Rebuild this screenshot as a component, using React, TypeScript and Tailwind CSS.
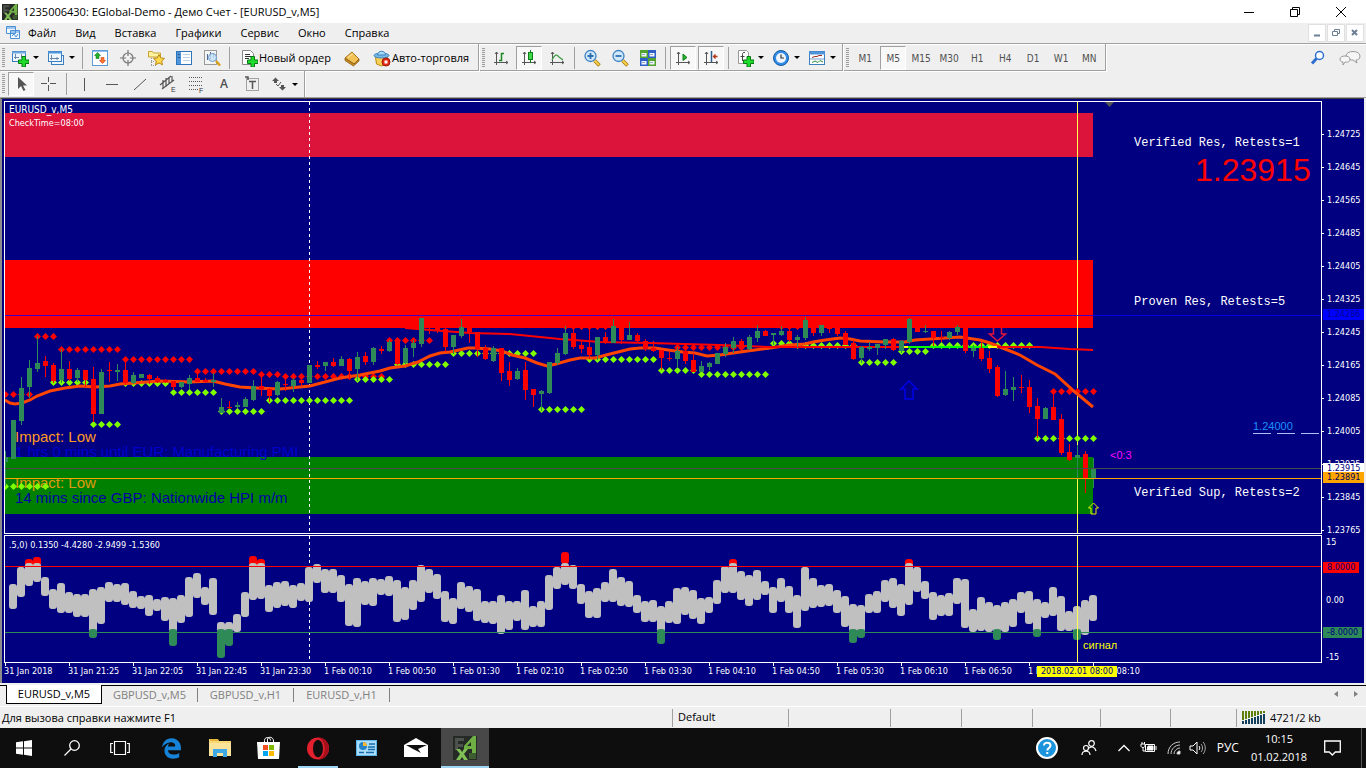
import React, { useState } from "react";
import { FaEdgeLegacy } from "react-icons/fa6";

type Candle = [high: number, bodyTop: number, bodyBottom: number, low: number, up: 0 | 1];

// one entry per 5 minute bar, 8px apart, first bar at x=5
const candles: Candle[] = [
  [451, 457, 462, 486, 1], [420, 420, 459, 459, 1], [377, 388, 421, 425, 1], [360, 368, 387, 398, 1],
  [336, 363, 369, 372, 1], [356, 361, 366, 377, 0], [363, 365, 381, 383, 0], [349, 369, 380, 383, 1],
  [361, 369, 379, 381, 0], [368, 370, 378, 382, 1], [370, 370, 380, 387, 0], [367, 379, 414, 422, 0],
  [369, 372, 414, 414, 1], [362, 370, 371, 382, 0], [364, 370, 372, 381, 1], [361, 370, 383, 385, 0],
  [372, 375, 383, 384, 1], [374, 374, 378, 378, 1], [374, 375, 379, 384, 0], [376, 378, 382, 383, 0],
  [379, 380, 382, 383, 0], [381, 381, 387, 390, 0], [382, 382, 387, 388, 1], [375, 378, 384, 389, 1],
  [372, 378, 382, 382, 0], [378, 380, 382, 383, 0], [373, 380, 382, 387, 1], [398, 407, 413, 413, 1],
  [401, 407, 408, 409, 0], [402, 405, 407, 408, 1], [397, 399, 407, 407, 1], [380, 386, 400, 401, 1],
  [374, 386, 389, 396, 0], [388, 389, 396, 402, 0], [381, 382, 395, 396, 1], [377, 384, 385, 391, 0],
  [378, 380, 386, 392, 1], [378, 380, 383, 386, 0], [365, 365, 383, 383, 1], [361, 365, 367, 369, 0],
  [362, 362, 366, 371, 1], [358, 362, 366, 367, 0], [356, 359, 366, 366, 1], [358, 359, 371, 378, 0],
  [352, 357, 369, 381, 1], [352, 356, 362, 365, 0], [347, 348, 362, 365, 1], [346, 349, 351, 354, 0],
  [340, 342, 351, 352, 1], [340, 341, 364, 365, 0], [345, 348, 363, 364, 1], [340, 343, 348, 357, 1],
  [318, 318, 344, 347, 1], [315, 320, 327, 334, 0], [315, 320, 330, 333, 0], [328, 329, 347, 352, 0],
  [335, 335, 347, 354, 1], [319, 327, 336, 338, 1], [325, 325, 332, 343, 0], [332, 332, 349, 357, 0],
  [345, 348, 359, 360, 0], [346, 348, 361, 362, 1], [348, 348, 373, 381, 0], [362, 371, 380, 386, 0],
  [368, 371, 379, 380, 1], [362, 370, 390, 400, 0], [389, 389, 395, 407, 0], [390, 391, 394, 411, 1],
  [362, 362, 393, 394, 1], [348, 353, 363, 365, 1], [326, 333, 354, 355, 1], [326, 333, 347, 349, 0],
  [341, 345, 349, 353, 0], [329, 347, 355, 359, 0], [337, 337, 355, 360, 1], [332, 337, 343, 344, 0],
  [319, 326, 343, 343, 1], [326, 326, 340, 344, 0], [322, 335, 340, 340, 1], [333, 335, 341, 342, 0],
  [339, 341, 349, 351, 0], [341, 348, 351, 352, 0], [350, 350, 358, 370, 0], [352, 358, 359, 361, 0],
  [347, 351, 359, 368, 1], [348, 351, 361, 364, 0], [353, 360, 372, 372, 0], [361, 366, 372, 372, 1],
  [362, 363, 367, 370, 1], [353, 353, 364, 364, 1], [343, 347, 354, 357, 1], [337, 341, 348, 353, 1],
  [339, 341, 346, 350, 0], [335, 337, 349, 350, 1], [325, 331, 338, 342, 1], [330, 331, 336, 336, 0],
  [333, 333, 335, 345, 1], [326, 331, 335, 336, 1], [328, 331, 340, 342, 0], [335, 337, 340, 347, 1],
  [317, 320, 338, 340, 1], [328, 328, 333, 336, 0], [325, 325, 333, 336, 1], [328, 328, 329, 333, 0],
  [328, 328, 334, 336, 0], [331, 333, 345, 345, 0], [340, 343, 359, 360, 0], [346, 347, 358, 363, 1],
  [342, 347, 349, 351, 1], [344, 344, 348, 355, 1], [339, 339, 345, 349, 1], [338, 339, 350, 351, 0],
  [340, 341, 351, 353, 1], [318, 319, 342, 344, 1], [328, 328, 332, 332, 0], [325, 331, 332, 333, 1],
  [331, 331, 338, 346, 0], [331, 337, 338, 342, 0], [331, 332, 338, 340, 1], [325, 327, 332, 335, 1],
  [328, 328, 351, 353, 0], [345, 348, 351, 357, 1], [342, 348, 359, 361, 0], [351, 358, 369, 373, 0],
  [365, 367, 396, 397, 0], [371, 389, 395, 396, 1], [377, 387, 390, 401, 1], [375, 387, 388, 393, 0],
  [380, 387, 407, 413, 0], [398, 406, 419, 438, 0], [407, 408, 419, 419, 1], [391, 407, 420, 420, 0],
  [414, 419, 453, 455, 0], [444, 452, 460, 461, 0], [445, 455, 458, 479, 1], [451, 454, 479, 493, 0],
  [458, 468, 479, 488, 1],
];

// x, count, y
const redDots = [
  [5, 4, 394], [37, 3, 336], [61, 8, 349], [125, 9, 359], [197, 8, 371], [261, 3, 374],
  [285, 13, 376], [389, 6, 340], [565, 6, 326], [677, 9, 347], [781, 3, 326], [1053, 6, 391],
];
const greenDots = [
  [5, 6, 486], [53, 5, 382], [93, 4, 424], [125, 6, 383], [173, 6, 392], [221, 6, 411], [269, 11, 400],
  [357, 5, 379], [397, 7, 364], [453, 11, 353], [541, 6, 409], [589, 9, 359], [661, 5, 370],
  [701, 9, 374], [773, 3, 343], [797, 8, 345], [861, 5, 362], [901, 4, 351], [933, 13, 345], [1037, 8, 438],
];

const movingAverage =
  "5,400 10,403 15,404 22,403 30,400 37,396 50,391 65,388 80,386 95,387 110,386 120,384 133,383 160,381 190,382 213,381 225,384 240,387 256,388 280,389 300,387 310,386 340,378 360,375 380,371 390,368 405,366 418,362 430,356 440,353 450,352 468,348 475,348 490,349 502,351 512,355 525,358 537,363 547,366 556,364 570,360 580,358 595,358 610,354 630,349 640,348 655,348 668,350 683,352 695,353 707,356 720,355 740,352 755,350 770,348 790,345 805,344 813,342 825,340 840,338 850,339 860,341 885,342 905,342 915,340 930,339 960,337 980,340 990,343 1000,347 1020,355 1037,365 1055,374 1075,392 1093,407";

// top and bottom of every oscillator bar, first one at x=13
const oscillator = [
  [584, 609], [567, 597], [559, 586], [557, 582], [577, 596], [589, 609], [583, 613], [592, 613], [594, 617],
  [594, 617], [589, 638], [587, 624], [582, 602], [584, 602], [583, 605], [591, 608], [596, 609], [595, 616],
  [599, 611], [597, 621], [598, 646], [595, 623], [577, 617], [573, 598], [587, 605], [578, 615], [622, 658],
  [622, 646], [614, 632], [592, 617], [556, 600], [559, 599], [585, 612], [582, 608], [581, 606], [585, 608],
  [583, 601], [567, 602], [564, 583], [569, 593], [569, 593], [575, 602], [584, 626], [578, 627], [581, 605],
  [578, 606], [579, 595], [576, 596], [580, 622], [587, 620], [580, 610], [565, 602], [569, 593], [574, 599],
  [591, 622], [598, 624], [582, 609], [586, 612], [589, 621], [601, 623], [601, 624], [595, 634], [601, 630],
  [601, 621], [590, 630], [606, 627], [601, 627], [575, 610], [567, 589], [552, 585], [565, 589], [584, 604],
  [591, 618], [588, 618], [582, 602], [569, 602], [577, 606], [581, 607], [595, 613], [601, 622], [600, 622],
  [606, 644], [601, 623], [588, 624], [587, 615], [590, 619], [598, 624], [597, 613], [580, 604], [566, 593],
  [559, 593], [571, 600], [575, 606], [570, 600], [581, 595], [587, 613], [578, 602], [586, 613], [595, 628],
  [567, 611], [578, 608], [585, 607], [584, 606], [590, 613], [596, 627], [604, 643], [605, 638], [594, 613],
  [591, 613], [580, 602], [578, 608], [584, 616], [559, 605], [567, 592], [581, 599], [592, 620], [595, 616],
  [593, 616], [578, 604], [579, 628], [609, 632], [597, 631], [602, 632], [605, 640], [602, 632], [599, 627],
  [592, 613], [591, 624], [599, 637], [602, 618], [587, 616], [596, 631], [611, 631], [606, 640], [600, 635],
  [595, 621],
];

const prices = [
  "1.24725", "1.24645", "1.24565", "1.24485", "1.24405", "1.24325", "1.24245",
  "1.24165", "1.24085", "1.24005", "1.23925", "1.23845", "1.23765",
];
const times = [
  "31 Jan 2018", "31 Jan 21:25", "31 Jan 22:05", "31 Jan 22:45", "31 Jan 23:30", "1 Feb 00:10",
  "1 Feb 00:50", "1 Feb 01:30", "1 Feb 02:10", "1 Feb 02:50", "1 Feb 03:30", "1 Feb 04:10",
  "1 Feb 04:50", "1 Feb 05:30", "1 Feb 06:10", "1 Feb 06:50", "1 Feb 07:30", "1 Feb 08:10",
];
const menu = ["Файл", "Вид", "Вставка", "Графики", "Сервис", "Окно", "Справка"];
const timeframes = ["M1", "M5", "M15", "M30", "H1", "H4", "D1", "W1", "MN"];
const tabs = ["EURUSD_v,M5", "GBPUSD_v,M5", "GBPUSD_v,H1", "EURUSD_v,H1"];

function Svg({ children, size = 18 }: { children: React.ReactNode; size?: number }) {
  return (
    <svg width={size} height={size} viewBox="0 0 18 18" fill="none" className="shrink-0">
      {children}
    </svg>
  );
}

const Plus = () => (
  <path d="M11 7.500h3.500V11H18v3.500h-3.500V18H11v-3.500H7.500V11H11z" fill="#1fdc2c" stroke="#067a10" strokeWidth="1" />
);
const Axes = () => <path d="M4.500 3v13M2 13.500h14M3 5l1.500-2L6 5M14 12l2 1.500-2 1.500" stroke="#555" />;

const NewChartIcon = () => (
  <Svg>
    <rect x="1.500" y="2.500" width="13" height="10" fill="#eef6ff" stroke="#3c7fc0" />
    <path d="M1 3.500h14" stroke="#6fa9dd" strokeWidth="2" />
    <path d="M4.500 5v5M3 8.500h5M10.500 5v4" stroke="#6a86a5" />
    <Plus />
  </Svg>
);
const ProfilesIcon = () => (
  <Svg>
    <rect x="4.500" y="6.500" width="12" height="9" fill="#eef6ff" stroke="#3c7fc0" />
    <rect x="1.500" y="2.500" width="13" height="10" fill="#eef6ff" stroke="#3c7fc0" />
    <path d="M1 3.500h14" stroke="#4f97dd" strokeWidth="2" />
    <path d="M4.500 6v5M3 9.500h9M10 8v3" stroke="#6a86a5" />
  </Svg>
);
const MarketIcon = () => (
  <Svg>
    <rect x="1.500" y="1.500" width="15" height="15" fill="#fff" stroke="#5b9bd8" />
    <path d="M2 2.500h14" stroke="#8ec1ee" />
    <path d="M6.500 3.500l3 3h-1.500v3h-3v-3H3.500z" fill="#23b12c" stroke="#0b7d16" strokeWidth=".6" />
    <path d="M11.500 14.500l3-3H13v-3h-3v3H8.500z" fill="#ff7733" stroke="#cc3d0a" strokeWidth=".6" />
  </Svg>
);
const TargetIcon = () => (
  <Svg>
    <circle cx="9" cy="9" r="5" stroke="#777" strokeWidth="1.200" />
    <path d="M9 1v6M9 11v6M1 9h6M11 9h6" stroke="#777" strokeWidth="1.200" />
  </Svg>
);
const FolderStarIcon = () => (
  <Svg>
    <path d="M1.500 8V2.500h4l1 1.500h7V8z" fill="#fff3a0" stroke="#c9a12c" />
    <path d="M4.500 9v8M4 12.500h3M4 16.500h5" stroke="#999" strokeDasharray="1 1" />
    <path d="M12 5.500l1.700 3.400 3.800.5-2.800 2.600.8 3.800-3.500-1.800-3.500 1.800.8-3.800-2.800-2.600 3.800-.5z" fill="#ffd94a" stroke="#b98a14" />
  </Svg>
);
const NavigatorIcon = () => (
  <Svg>
    <rect x="1.500" y="2.500" width="15" height="13" fill="#fff" stroke="#2f74b8" />
    <path d="M4 3v12" stroke="#4f97dd" strokeWidth="4" />
    <path d="M3.500 5.500h1M3.500 8.500h1" stroke="#111" />
    <path d="M8 5.500h7M8 8.500h7M8 11.500h7" stroke="#bcd0e8" />
  </Svg>
);
const TesterIcon = () => (
  <Svg>
    <rect x="1.500" y="1.500" width="12" height="14" fill="#f4f4f4" stroke="#9a9a9a" />
    <path d="M4.500 5v6M7.500 3v7M10.500 4v5" stroke="#4a6a90" />
    <path d="M13 12l4 4.500" stroke="#d6a018" strokeWidth="2.500" />
    <circle cx="9.500" cy="8.500" r="4" fill="#c5e2fa" fillOpacity=".8" stroke="#6d9dcf" />
  </Svg>
);
const OrderIcon = () => (
  <Svg>
    <path d="M2.500 1.500h8l3 3v11h-11z" fill="#fff" stroke="#888" />
    <path d="M5 5.500h5M5 7.500h6M5 9.500h4" stroke="#333" />
    <Plus />
  </Svg>
);
const BookIcon = () => (
  <Svg>
    <path d="M2 9l7-6 7 7-5 5z" fill="#f2c257" stroke="#a8741a" />
    <path d="M2 9v2.500l8.500 5.500L16 12v-2l-5 5z" fill="#c88c24" stroke="#8a5c10" strokeWidth=".8" />
    <path d="M5 8.500l5-4" stroke="#fde7a8" />
  </Svg>
);
const AutoTradeIcon = () => (
  <Svg>
    <path d="M2.500 8h12l-1 7-5 2-5-2z" fill="#f5cf56" stroke="#b98a14" />
    <ellipse cx="8.500" cy="6.500" rx="7.500" ry="2.500" fill="#74b9ea" stroke="#3d83bd" />
    <path d="M4.500 6c0-5 8-5 8 0z" fill="#a5d7f7" stroke="#3d83bd" />
    <circle cx="13" cy="13" r="4" fill="#e02b16" stroke="#a81508" />
    <rect x="11.500" y="11.500" width="3" height="3" fill="#fff" />
  </Svg>
);
const BarsIcon = () => (
  <Svg>
    <Axes />
    <path d="M7 11.500h2.500V4.500H12" stroke="#1c8a22" strokeWidth="1.500" />
  </Svg>
);
const CandlesIcon = () => (
  <Svg>
    <Axes />
    <path d="M10.500 1v13" stroke="#0e7e16" />
    <rect x="8.500" y="3.500" width="4" height="7" fill="#3fd74b" stroke="#0e7e16" />
  </Svg>
);
const LineIcon = () => (
  <Svg>
    <Axes />
    <path d="M4 11c3-6 5-6 7-3l4 3" stroke="#3f9d46" strokeWidth="1.300" />
  </Svg>
);
const ZoomIcon = ({ plus }: { plus?: boolean }) => (
  <Svg>
    <path d="M11.500 11.500l5 5" stroke="#a87c12" strokeWidth="3.500" />
    <path d="M11.500 11.500l4.500 4.500" stroke="#f5d04a" strokeWidth="2" />
    <circle cx="7.500" cy="7" r="5.500" fill="#cfe8fc" stroke="#3f83c4" strokeWidth="1.300" />
    <path d={plus ? "M4.500 7h6M7.500 4v6" : "M4.500 7h6"} stroke="#2f6fae" strokeWidth="1.800" />
  </Svg>
);
const TileIcon = () => (
  <Svg>
    <path d="M1 1h8v8H1zM9 9h8v8H9z" fill="#52a32c" />
    <path d="M9 1h8v8H9zM1 9h8v8H1z" fill="#2e5fc9" />
    <path d="M2.500 4h5v3.500h-5zM10.500 4h5v3.500h-5zM2.500 12h5v3.500h-5zM10.500 12h5v3.500h-5z" fill="#f0f5ff" />
    <path d="M3 5.500h3M11 5.500h3M3 13.500h3M11 13.500h3" stroke="#9ab" />
  </Svg>
);
const ScrollIcon = () => (
  <Svg>
    <Axes />
    <path d="M9 5l4 3.500-4 3z" fill="#27b433" stroke="#0e7e16" />
  </Svg>
);
const ShiftIcon = () => (
  <Svg>
    <Axes />
    <path d="M9.500 2v11" stroke="#2a5f8c" strokeWidth="1.500" />
    <path d="M15.500 7.500H12M13.500 5.500l-2 2 2 2" stroke="#b5381a" strokeWidth="1.300" />
  </Svg>
);
const IndicatorIcon = () => (
  <Svg>
    <path d="M2.500 1.500h8l2 2v11h-10z" fill="#fff" stroke="#999" />
    <path d="M9 3.500c-2-.5-2.500.5-2.500 2V12M4.500 7.500h4" stroke="#444" />
    <Plus />
  </Svg>
);
const ClockIcon = () => (
  <Svg>
    <circle cx="9" cy="9" r="7.500" fill="#2f8ce8" stroke="#155a9f" />
    <circle cx="9" cy="9" r="5" fill="#eef4fa" />
    <path d="M9 5.500V9h3" stroke="#333" strokeWidth="1.200" />
  </Svg>
);
const TemplateIcon = () => (
  <Svg>
    <rect x="1.500" y="2.500" width="15" height="13" fill="#fff" stroke="#3c7fc0" />
    <path d="M1 4h16" stroke="#4d94da" strokeWidth="3" />
    <path d="M2 10h14" stroke="#6d9fce" />
    <path d="M4 8.500l3-1h2l2-1h3" stroke="#9b2d1d" />
    <path d="M4 13.500l3-1.500 3 1.500 2-2 3 1.500" stroke="#2c8f3b" />
  </Svg>
);

const Grip = () => (
  <span className="mx-0.5 h-5 w-[3px] bg-[repeating-linear-gradient(#9c9c9c_0_1px,#efefef_1px_2px)]" />
);
const Sep = () => <span className="mx-[3px] h-[22px] w-px bg-[#a0a0a0]" />;
const Caret = () => <span className="border-x-[3px] border-t-[3px] border-x-transparent border-t-black" />;

interface ToolProps {
  label: string;
  on?: boolean;
  drop?: boolean;
  text?: string;
  children: React.ReactNode;
}

function Tool({ label, on, drop, text, children }: ToolProps) {
  const width = text ? "gap-px px-1.5" : drop ? "w-[34px] gap-1" : "w-[26px]";
  return (
    <button
      aria-label={label}
      className={`mx-px flex h-6 items-center justify-center text-[11px] text-[#505050] ${width} ${
        on ? "border border-r-white border-b-white border-l-[#a0a0a0] border-t-[#a0a0a0] bg-[#f8f8f8]" : ""
      }`}
    >
      {children}
      {text && <span className="text-black">{text}</span>}
      {drop && <Caret />}
    </button>
  );
}

function Bar({ children }: { children: React.ReactNode }) {
  return (
    <div className="mr-px flex h-[27px] items-center border-r border-b border-[#a0a0a0] pt-px pr-0.5 shadow-[1px_1px_0_#fff]">
      {children}
    </div>
  );
}

function Logo({ size }: { size: number }) {
  return (
    <svg width={size} height={size} viewBox="0 0 24 24">
      <rect width="24" height="24" fill="#262a26" />
      <path d="M2 2h9v3H5v3h5v3H5v3H2z" fill="#4d524c" />
      <path d="M20 0L11 10v3h8v4h4V0z M18 6v4h-4z" fill="#6fb045" fillRule="evenodd" />
      <path d="M3 13h4l2 3 2-3h4l-4 5 4 6h-4l-2-3-2 3H3l4-6z" fill="#7fbf55" />
      <path d="M16 17h7v6h-7z" fill="#3e5c31" />
    </svg>
  );
}

function Dots({ rows, color }: { rows: number[][]; color: string }) {
  return (
    <g fill={color}>
      {rows.map(([x, count, y]) =>
        Array.from({ length: count }).map((_, i) => (
          <path key={`${x}-${y}-${i}`} d={`M${x + i * 8 - 3} ${y + 0.5}l3.500 -3.500l3.500 3.500l-3.500 3.500z`} />
        ))
      )}
    </g>
  );
}

function PriceChart() {
  return (
    <svg className="block h-[431px] w-full" role="img" aria-label="EURUSD M5">
      <g transform="translate(-5 -102)" fontFamily="Liberation Sans">
        <rect x="5" y="113" width="1088" height="44" fill="#dc143c" />
        <rect x="5" y="260" width="1088" height="68" fill="#ff0000" />
        <rect x="5" y="457" width="1088" height="57" fill="#008000" />
        <text x="15" y="457" fontSize="15" fill="#0000cd">1 hrs 0 mins until EUR: Manufacturing PMI</text>
        <text x="15" y="442" fontSize="15" fill="#ff9b1e">Impact: Low</text>
        <text x="15" y="488" fontSize="15" fill="#e09a10">Impact: Low</text>
        <text x="15" y="503" fontSize="15" fill="#0000a8">14 mins since GBP: Nationwide HPI m/m</text>
        <path d="M309.500 102v432" stroke="#fff" strokeDasharray="3 3" />
        <path d="M1077.500 102v432" stroke="#ffff50" />
        <path d="M1105 102h9l-4.500 5z" fill="#555" />
        <Dots rows={redDots} color="#ff0000" />
        <Dots rows={greenDots} color="#7fff00" />
        <polyline points={movingAverage} fill="none" stroke="#ff4500" strokeWidth="3" />
        <g fill="none" strokeWidth="2">
          <polyline points="405,328 430,330 470,333 510,334 560,339 600,342 650,343 720,345 770,347 902,347" stroke="#f00" />
          <path d="M900 347h12M986 347h12" stroke="#ff0" />
          <path d="M908 347h80" stroke="#0f0" />
          <polyline points="997,347 1040,347 1070,349 1093,350" stroke="#f00" />
        </g>
        {candles.map(([high, top, bottom, low, up], i) => (
          <g key={i} fill={up ? "#2e8b57" : "#ff0000"} shapeRendering="crispEdges">
            <rect x={5 + i * 8} y={high} width="1" height={low - high} />
            <rect x={3 + i * 8} y={top} width="5" height={bottom - top} />
          </g>
        ))}
        <rect x="5" y="315" width="100%" height="1" fill="#0000ff" fillOpacity=".75" />
        <rect x="5" y="468" width="100%" height="1" fill="#4a4a4a" />
        <rect x="5" y="478" width="100%" height="1" fill="#ffa500" />
        <path d="M909 381l8 8h-4v10h-8v-10h-4z" fill="none" stroke="#0000e6" strokeWidth="1.500" />
        <path d="M993.500 328v6h-4l8 7l8-7h-4v-6" fill="none" stroke="#e0143c" strokeWidth="1.500" />
        <path d="M1093.500 503l5 5h-2.500v6h-5v-6h-2.500z" fill="none" stroke="#e6f000" />
        <path d="M1253 433.500h66" stroke="#a9c0f0" strokeDasharray="18 6" />
        <text x="1253" y="430" fontSize="11" fill="#1e90ff">1.24000</text>
        <text x="1110" y="459" fontSize="11" fill="#ff00ff">&lt;0:3</text>
        <text x="1195" y="181" fontSize="32" fill="#ff0000">1.23915</text>
        <g fontFamily="Liberation Mono" fontSize="12" fill="#fff">
          <text x="1134" y="146">Verified Res, Retests=1</text>
          <text x="1134" y="305">Proven Res, Retests=5</text>
          <text x="1134" y="496">Verified Sup, Retests=2</text>
        </g>
        <g fontFamily="DejaVu Sans Condensed, DejaVu Sans" fill="#fff">
          <text x="9" y="113" fontSize="10">EURUSD_v,M5</text>
          <text x="9" y="126" fontSize="9">CheckTime=08:00</text>
        </g>
      </g>
    </svg>
  );
}

function Oscillator() {
  return (
    <svg className="block h-[126px] w-full" role="img" aria-label="Oscillator">
      <g transform="translate(-5 -536)">
        <path d="M309.500 536v128" stroke="#fff" strokeDasharray="3 3" />
        {oscillator.map(([top, bottom], i) => {
          const x = 9 + i * 8;
          const grayTop = top < 560 ? 563 : top;
          const grayBottom = bottom > 636 ? 632 : bottom;
          return (
            <g key={i}>
              {top < 560 && <rect x={x} y={top} width="8" height="12" rx="3" fill="#ff0000" />}
              <rect x={x} y={grayTop} width="8" height={grayBottom - grayTop} rx="3" fill="#c0c0c0" />
              {bottom > 636 && <rect x={x} y="629" width="8" height={bottom - 629} rx="3" fill="#2e8b57" />}
            </g>
          );
        })}
        <rect x="5" y="566" width="100%" height="1" fill="#ff0000" />
        <rect x="5" y="632" width="100%" height="1" fill="#2e8b57" />
        <path d="M1077.500 536v128" stroke="#ffff50" />
        <text x="1083" y="649" fontSize="11" fontFamily="Liberation Sans" fill="#ffff00">сигнал</text>
        <text x="9" y="548" fontSize="9" fontFamily="DejaVu Sans Condensed, DejaVu Sans" fill="#fff">
          .5,0) 0.1350 -4.4280 -2.9499 -1.5360
        </text>
      </g>
    </svg>
  );
}

export default function App() {
  const [frame, setFrame] = useState("M5");
  const [tab, setTab] = useState(0);

  return (
    <div className="flex min-h-screen flex-col bg-[#efefef] font-['Open_Sans',sans-serif] text-[12px] leading-4 text-black">
      {/* title bar */}
      <header className="flex h-[23px] items-center bg-white px-0.5">
        <Logo size={16} />
        <h1 className="ml-[5px] flex-1 text-[11px]">1235006430: EGlobal-Demo - Демо Счет - [EURUSD_v,M5]</h1>
        <div className="flex text-black">
          {["M0 5.500h10", "M.5 2.500h7v7h-7zM2.500 2.500v-2h7v7h-2", "M0 0l10 10M10 0L0 10"].map((d, i) => (
            <button key={d} aria-label={["Свернуть", "Развернуть", "Закрыть"][i]} className="flex w-[46px] justify-center">
              <svg width="10" height="10" fill="none" stroke="#000"><path d={d} /></svg>
            </button>
          ))}
        </div>
      </header>

      {/* menu */}
      <nav className="flex h-[21px] items-center border-b border-[#a0a0a0] pl-[5px] text-[11px] shadow-[0_1px_0_#fff]">
        <svg width="16" height="16" fill="none" stroke="#4a90d9" className="mr-px">
          <path d="M1.500 1.500h9v7h-9zM1 3h10M5.500 5.500h9v8h-9z" fill="#f2f8ff" />
          <path d="M5 7h10M7 11l2-2 2 3 2-3" />
        </svg>
        {menu.map((item) => (
          <button key={item} className="mr-[7px] px-1.5">{item}</button>
        ))}
        <div className="ml-auto flex gap-px pr-0.5">
          {["M3 8.500h6", "M2.500 4.500h5v4h-5zM4.500 4V2.500h5v4H8", "M3 3l5 5M8 3L3 8"].map((d, i) => (
            <button key={d} aria-label={["Свернуть окно", "Восстановить окно", "Закрыть окно"][i]} className="flex size-[18px] items-center justify-center border border-[#e0e0e0] bg-white">
              <svg width="12" height="12" fill="none" stroke="#6c7f93" strokeWidth={i === 1 ? 1 : 2}><path d={d} /></svg>
            </button>
          ))}
        </div>
      </nav>

      {/* toolbars */}
      <div className="flex h-[27px]">
        <Bar>
          <Grip />
          <Tool label="Новый график" drop><NewChartIcon /></Tool>
          <Tool label="Профили" drop><ProfilesIcon /></Tool>
          <Sep />
          <Tool label="Обзор рынка"><MarketIcon /></Tool>
          <Tool label="Окно данных"><TargetIcon /></Tool>
          <Tool label="Навигатор"><FolderStarIcon /></Tool>
          <Tool label="Терминал"><NavigatorIcon /></Tool>
          <Tool label="Тестер стратегий"><TesterIcon /></Tool>
          <Sep />
          <Tool label="Новый ордер" text="Новый ордер"><OrderIcon /></Tool>
          <Tool label="MetaEditor"><BookIcon /></Tool>
          <Tool label="Авто-торговля" text="Авто-торговля"><AutoTradeIcon /></Tool>
        </Bar>
        <Bar>
          <Grip />
          <Tool label="Бары"><BarsIcon /></Tool>
          <Tool label="Свечи" on><CandlesIcon /></Tool>
          <Tool label="Линия"><LineIcon /></Tool>
          <Sep />
          <Tool label="Увеличить"><ZoomIcon plus /></Tool>
          <Tool label="Уменьшить"><ZoomIcon /></Tool>
          <Tool label="Расположить окна"><TileIcon /></Tool>
          <Sep />
          <Tool label="Автопрокрутка" on><ScrollIcon /></Tool>
          <Tool label="Сдвиг графика" on><ShiftIcon /></Tool>
          <Sep />
          <Tool label="Индикаторы" drop><IndicatorIcon /></Tool>
          <Tool label="Периоды" drop><ClockIcon /></Tool>
          <Tool label="Шаблоны" drop><TemplateIcon /></Tool>
        </Bar>
        <Bar>
          <Grip />
          {timeframes.map((tf) => (
            <button
              key={tf}
              onClick={() => setFrame(tf)}
              className={`mx-px flex h-6 w-[26px] items-center justify-center border pt-0.5 font-['DejaVu_Sans_Condensed','DejaVu_Sans',sans-serif] text-[10px] text-[#505050] ${
                frame === tf ? "border-r-white border-b-white border-l-[#a0a0a0] border-t-[#a0a0a0] bg-[#f8f8f8]" : "border-transparent"
              }`}
            >
              {tf}
            </button>
          ))}
        </Bar>
        <div className="ml-auto flex items-center gap-3 pr-1">
          <button aria-label="Поиск">
            <svg width="16" height="16" fill="none" stroke="#2f6fd0">
              <path d="M6.500 8.500L2 13.500" strokeWidth="3" /><circle cx="9.500" cy="5.500" r="4" fill="#fff" strokeWidth="1.500" />
            </svg>
          </button>
          <button aria-label="Чат">
            <svg width="24" height="16" fill="#f6f6f6" stroke="#999">
              <path d="M8 6c0-6 14-6 14 0 0 3-2 4-4 4l1 3-4-3C11 10 8 9 8 6z" /><path d="M2 9c0-4 10-4 10 0s-4 3-5 3l-2 3v-3C3 12 2 11 2 9z" />
            </svg>
          </button>
        </div>
      </div>
      <div className="flex h-[27px] border-b border-[#a0a0a0]">
        <div className="flex items-center border-r border-[#a0a0a0] pr-0.5 shadow-[1px_0_0_#fff]">
          <Grip />
          <Tool label="Курсор" on>
            <Svg><path d="M6 2v12l3-3 2.500 5 2-1-2.500-4.500h4z" fill="#555" /></Svg>
          </Tool>
          <Tool label="Перекрестие">
            <Svg><path d="M8.500 2v5M8.500 10v6M1 8.500h6M10 8.500h6" stroke="#555" /></Svg>
          </Tool>
          <Sep />
          <Tool label="Вертикальная линия"><Svg><path d="M9.500 3v13" stroke="#555" /></Svg></Tool>
          <Tool label="Горизонтальная линия"><Svg><path d="M3 9.500h12" stroke="#555" /></Svg></Tool>
          <Tool label="Трендовая линия"><Svg><path d="M3 15L15 4" stroke="#555" /></Svg></Tool>
          <Tool label="Равноудаленный канал">
            <Svg>
              <path d="M1 10L12 1M3 14L15 5M4 5v8M7 3v9M10 2v7M13 1v6" stroke="#555" strokeWidth="1.200" />
              <text x="12" y="17" fontSize="7" fontFamily="Liberation Sans" fill="#333">E</text>
            </Svg>
          </Tool>
          <Tool label="Линии Фибоначчи">
            <Svg>
              <path d="M2 2.500h14M2 6.500h14M2 10.500h14M2 14.500h9" stroke="#555" strokeDasharray="1 1" />
              <text x="12" y="18" fontSize="7" fontFamily="Liberation Sans" fill="#333">F</text>
            </Svg>
          </Tool>
          <Tool label="Текст"><span className="text-[12px] font-semibold">A</span></Tool>
          <Tool label="Метка">
            <Svg>
              <rect x="3.500" y="3.500" width="12" height="12" stroke="#555" strokeDasharray="1 1" />
              <path d="M6 6.500h7M9.500 6v8M2 2h3v3" stroke="#555" strokeWidth="1.500" />
            </Svg>
          </Tool>
          <Tool label="Стрелки" drop>
            <Svg>
              <path d="M2 6l3.500-3.500L9 6H7v2H4V6zM9 12l3.500 3.500L16 12h-2v-2h-3v2z" fill="#555" />
              <path d="M6 9l2 2 3-4" stroke="#555" />
            </Svg>
          </Tool>
        </div>
      </div>

      {/* chart window */}
      <main className="mr-0.5 border-t border-l-2 border-t-[#404040] border-l-[#8c8c8c] bg-[#000080] pt-0.5 pl-0.5 font-['DejaVu_Sans_Condensed','DejaVu_Sans',sans-serif] text-[9px] leading-[11px] text-white">
        <div className="flex">
          <section className="min-w-0 flex-1 border border-white"><PriceChart /></section>
          <aside className="relative h-[433px] w-[42px]">
            <ul className="pt-[17px]">
              {prices.map((p) => (
                <li key={p} className="flex h-[33px] items-center gap-[3px] whitespace-nowrap">
                  <span className="h-px w-0.5 bg-white" />{p}
                </li>
              ))}
            </ul>
            <span className="absolute top-[208px] right-0 left-px bg-[#0000ff] pl-1 text-[#000090]">1.24286</span>
            <span className="absolute top-[362px] right-0 left-px bg-white pl-1 text-[#000080]">1.23915</span>
            <span className="absolute top-[371px] right-0 left-px bg-[#ffa500] pl-1 text-[#000060]">1.23891</span>
          </aside>
        </div>
        <div className="mt-px flex">
          <section className="min-w-0 flex-1 border border-white"><Oscillator /></section>
          <aside className="flex w-[42px] flex-col justify-between pt-0.5 pl-1">
            <span>15</span>
            <span className="-ml-[3px] self-start bg-[#ff0000] px-1 text-[#000080]">8.0000</span>
            <span className="my-2">0.00</span>
            <span className="-ml-[3px] self-start bg-[#2e8b57] px-1 text-[#000080]">-8.0000</span>
            <span>-15</span>
          </aside>
        </div>
        <div className="relative flex h-5 overflow-hidden">
          {times.map((t) => (
            <span key={t} className="w-16 shrink-0 whitespace-nowrap">
              <i className="ml-px block h-[3px] w-px bg-white" />
              {t}
            </span>
          ))}
          <span className="absolute top-[3px] left-[1033px] w-20 bg-[#ffff00] text-center text-[#000080]">2018.02.01 08:00</span>
        </div>
      </main>

      {/* chart tabs */}
      <div className="mt-0.5 flex h-[21px] border-t border-black pl-1.5 text-[11px] text-[#808080]">
        {tabs.map((name, i) => (
          <button
            key={name}
            onClick={() => setTab(i)}
            className={
              tab === i
                ? "-mt-px h-[19px] w-24 border border-t-0 border-black bg-white text-black"
                : "my-0.5 h-[14px] w-24 border-r border-[#808080] leading-[14px]"
            }
          >
            {name}
          </button>
        ))}
        <div className="ml-auto flex items-center gap-4 pr-2 pb-1">
          <button aria-label="Назад" className="border-y-[3px] border-r-4 border-y-transparent border-r-[#808080]" />
          <button aria-label="Вперед" className="border-y-[3px] border-l-4 border-y-transparent border-l-[#808080]" />
        </div>
      </div>

      {/* status bar */}
      <footer className="flex h-[22px] items-center border-t border-white text-[11px]">
        <span className="flex-1 pl-0.5">Для вызова справки нажмите F1</span>
        <span className="h-[18px] w-[116px] border-l border-[#a0a0a0] pl-[5px]">Default</span>
        <span className="h-[18px] w-[102px] border-l border-[#a0a0a0]" />
        <span className="h-[18px] w-[71px] border-l border-[#a0a0a0]" />
        <span className="h-[18px] w-[71px] border-l border-[#a0a0a0]" />
        <span className="h-[18px] w-[68px] border-l border-[#a0a0a0]" />
        <span className="h-[18px] w-[70px] border-l border-[#a0a0a0]" />
        <span className="h-[18px] w-[66px] border-l border-[#a0a0a0]" />
        <span className="flex h-[18px] w-[130px] items-center gap-1 border-l border-[#a0a0a0] pl-[5px]">
          <svg width="24" height="13">
            {[0, 1, 2, 3, 4, 5, 6, 7].map((i) => (
              <g key={i}>
                <rect x={i * 3} y="0" width="2" height={9 - i} fill="#5f7f0a" />
                <rect x={i * 3} y={10 - i} width="2" height={3 + i} fill="#12405c" />
              </g>
            ))}
          </svg>
          4721/2 kb
        </span>
      </footer>

      {/* taskbar */}
      <div className="flex h-10 bg-[#0e0e0e] text-white">
        <button aria-label="Пуск" className="flex w-12 items-center justify-center">
          <svg width="16" height="16" fill="#fff"><path d="M0 2.300L7 1.300V7.500H0zM8 1.200L16 0v7.500H8zM0 8.500h7v6.200l-7-1zM8 8.500h8V16l-8-1.200z" /></svg>
        </button>
        <button aria-label="Поиск Windows" className="flex w-12 items-center justify-center">
          <svg width="16" height="16" fill="none" stroke="#fff" strokeWidth="1.300"><circle cx="10.500" cy="5.500" r="4.800" /><path d="M7 9l-6.500 6.500" /></svg>
        </button>
        <button aria-label="Представление задач" className="flex w-12 items-center justify-center">
          <svg width="20" height="14" fill="none" stroke="#fff" strokeWidth="1.200"><path d="M4.500.5h11v13h-11zM3 2.500H.7v9H3M17 2.500h2.300v9H17" /></svg>
        </button>
        <div className="ml-[3px] flex gap-px">
          <button aria-label="Edge" className="flex w-12 items-center justify-center">
            <FaEdgeLegacy size={21} color="#1683d8" />
          </button>
          <button aria-label="Проводник" className="flex w-12 items-center justify-center">
            <svg width="22" height="20">
              <path d="M0 1h9l1 2h12v15H0z" fill="#f8d775" /><path d="M1 1h8v2H1z" fill="#e6b53a" /><path d="M0 5h22v13H0z" fill="#fbe49a" />
              <path d="M4 19v-8h14v8h-4v-4H8v4z" fill="#3fa9e6" />
            </svg>
          </button>
          <button aria-label="Магазин" className="flex w-12 items-center justify-center">
            <svg width="24" height="24">
              <path d="M7.500 7V4.500c0-4 6-4 6 0M10.500 6V3c1-3 6-2 6 2v2" fill="none" stroke="#fff" /><path d="M0 6h23l-1 17H1z" fill="#fff" />
              <path d="M6 9h5v5H6z" fill="#f25022" /><path d="M12 9h5v5h-5z" fill="#7fba00" /><path d="M6 15h5v5H6z" fill="#00a4ef" /><path d="M12 15h5v5h-5z" fill="#ffb900" />
            </svg>
          </button>
          <button aria-label="Opera" className="flex w-12 flex-col items-center justify-between pt-[9px]">
            <svg width="24" height="24">
              <ellipse cx="12" cy="11.500" rx="11" ry="11" fill="#e2202e" />
              <path d="M12 .5a11 11 0 0 1 0 22c9-3 9-19 0-22z" fill="#a80f1c" />
              <ellipse cx="12" cy="11.500" rx="5" ry="8.800" fill="#0e0e0e" />
            </svg>
            <span className="h-0.5 w-10 bg-[#9fd5f5]" />
          </button>
          <button aria-label="Панель управления" className="flex w-12 items-center justify-center">
            <svg width="22" height="16">
              <rect width="21" height="16" fill="#5db7ea" /><rect x="1" y="1" width="19" height="14" fill="#a8dcf8" /><circle cx="7" cy="6" r="4" fill="#2382c8" />
              <path d="M7 6V2a4 4 0 0 1 4 4z" fill="#f7b733" /><path d="M13 4h6M12 7h7M12 9.500h7M3 12.500h5M10 12.500h8" stroke="#1a6cae" strokeWidth="1.500" />
            </svg>
          </button>
          <button aria-label="Почта" className="flex w-12 items-center justify-center">
            <svg width="24" height="20"><path d="M0 7L12 0l12 7v12H0z" fill="#fff" /><path d="M2 7h21l-9 4 3 4-8-4z" fill="#0e0e0e" /></svg>
          </button>
          <button aria-label="MetaTrader" className="flex w-12 flex-col items-center justify-between bg-[#484848] pt-2">
            <Logo size={24} />
            <span className="h-0.5 w-12 bg-[#9fd5f5]" />
          </button>
        </div>
        <div className="ml-auto flex items-center pr-1">
          <button aria-label="Справка Windows" className="mr-[23px]">
            <svg width="22" height="22">
              <circle cx="11" cy="11" r="10" fill="#1a94dc" stroke="#fff" strokeWidth="2" />
              <path d="M8 8.500c0-4 6.500-3.500 6.500 0 0 2.500-3.200 2.500-3.200 5M11.300 15v2" fill="none" stroke="#fff" strokeWidth="2" />
            </svg>
          </button>
          <button aria-label="Люди" className="mr-[21px]">
            <svg width="16" height="16" fill="none" stroke="#fff" strokeWidth="1.200"><circle cx="10.500" cy="3.500" r="2.800" /><circle cx="5" cy="8" r="2.500" /><path d="M1 15c0-5 8-5 8 0M8 8c3-2 6-1 7 3" /></svg>
          </button>
          <button aria-label="Скрытые значки" className="mr-2.5">
            <svg width="12" height="8" fill="none" stroke="#fff" strokeWidth="1.300"><path d="M.5 7L6 1.500 11.500 7" /></svg>
          </button>
          <svg width="17" height="14" fill="none" stroke="#fff" className="mr-2.5"><path d="M5.500 3.500h9v7h-9zM16 5v4M1 3h4v2c0 2-4 2-4 0zM2 3V1M4.500 3V1M3 6v4h2" /><path d="M8 5h5v4H7z" fill="#fff" /></svg>
          <svg width="14" height="14" fill="none" stroke="#ccc" className="mr-2"><path d="M1 13C1 6 6 1 13 1M4 13c0-5 4-9 9-9M7 13c0-3 3-6 6-6" /><path d="M10 13c0-2 1-3 3-3v3z" fill="#fff" /></svg>
          <svg width="18" height="14" fill="none" stroke="#fff" className="mr-2.5"><path d="M1 5h3l4-4v12L4 9H1zM10 5c1 1 1 3 0 4" /><path d="M12 3c2 2 2 6 0 8M14 1c3 3 3 9 0 12" stroke="#aaa" /></svg>
          <button className="mr-3 text-[12px]">РУС</button>
          <div className="mr-[17px] text-center text-[11px] leading-[18px]">
            10:15
            <br />
            01.02.2018
          </div>
          <button aria-label="Уведомления" className="mr-5">
            <svg width="17" height="17" fill="none" stroke="#fff" strokeWidth="1.300"><path d="M.7 1h15.600v11h-5l-3 3-3-3H.7z" /></svg>
          </button>
          <span className="h-10 w-px bg-[#555]" />
        </div>
      </div>
    </div>
  );
}
